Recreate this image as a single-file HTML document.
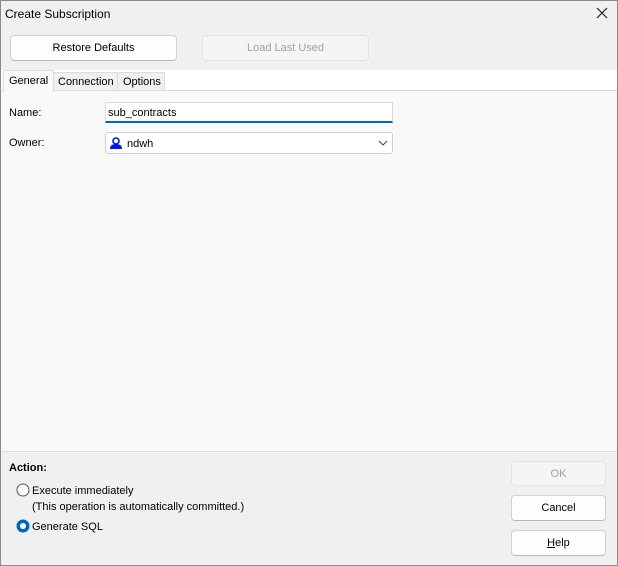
<!DOCTYPE html>
<html><head><style>
*{box-sizing:border-box;margin:0;padding:0}
body{width:618px;height:566px;overflow:hidden;background:#f0f0f0;font-family:"Liberation Sans",sans-serif;font-size:11px;color:#000;position:relative}
.frame{position:absolute;left:0;top:0;width:618px;height:566px;border:1px solid #8a8a8a}
.a{position:absolute;white-space:nowrap}
.btn{position:absolute;background:#fdfdfd;border:1px solid #d0d0d0;border-radius:4px;text-align:center;line-height:25px;border-bottom-color:#b8b8b8}
.dis{background:#f5f5f5;border-color:#e3e3e3;color:#a0a0a0}
</style></head><body>
<div class="frame"></div>
<div class="a" style="left:5px;top:7px;font-size:12px">Create Subscription</div>
<svg class="a" style="left:596px;top:7px" width="12" height="12"><path d="M1 1L11 11M11 1L1 11" stroke="#222" stroke-width="1.2"/></svg>
<div class="btn" style="left:10px;top:35px;width:167px;height:26px">Restore Defaults</div>
<div class="btn dis" style="left:202px;top:35px;width:167px;height:26px">Load Last Used</div>
<div class="a" style="left:1px;top:70px;width:616px;height:21px;background:#fff"></div>
<div class="a" style="left:1px;top:90px;width:616px;height:362px;background:#f9f9f9;border-top:1px solid #dcdcdc;border-bottom:1px solid #dcdcdc"></div>
<div class="a" style="left:3px;top:70px;width:51px;height:22px;background:#f9f9f9;border:1px solid #dcdcdc;border-bottom:none;padding:4px 0 0 5px">General</div>
<div class="a" style="left:54px;top:72px;width:64px;height:19px;background:#f0f0f0;border:1px solid #dcdcdc;border-left:none;padding:3px 0 0 4px">Connection</div>
<div class="a" style="left:118px;top:72px;width:47px;height:19px;background:#f0f0f0;border:1px solid #dcdcdc;border-left:none;padding:3px 0 0 5px">Options</div>
<div class="a" style="left:9px;top:107px">Name:</div>
<div class="a" style="left:105px;top:102px;width:288px;height:21px;background:#fff;border:1px solid #dadada;border-bottom:2px solid #0067c0;padding:4px 0 0 2px">sub_contracts</div>
<div class="a" style="left:9px;top:137px">Owner:</div>
<div class="a" style="left:105px;top:132px;width:288px;height:22px;background:#fff;border:1px solid #cfcfcf;border-radius:3px;padding:5px 0 0 21px">ndwh</div>
<svg class="a" style="left:109px;top:137px" width="14" height="13"><circle cx="7" cy="4" r="3" fill="none" stroke="#0018e0" stroke-width="1.6"/><path d="M1 12Q1 7 7 7Q13 7 13 12Z" fill="#0018e0"/></svg>
<svg class="a" style="left:378px;top:140px" width="10" height="7"><path d="M1 1L5 5L9 1" fill="none" stroke="#444" stroke-width="1"/></svg>
<div class="a" style="left:9px;top:462px;font-weight:bold">Action:</div>
<svg class="a" style="left:16px;top:483px" width="14" height="14"><circle cx="7" cy="7" r="6" fill="#fff" stroke="#555" stroke-width="1"/></svg>
<div class="a" style="left:32px;top:485px">Execute immediately</div>
<div class="a" style="left:32px;top:501px">(This operation is automatically committed.)</div>
<svg class="a" style="left:16px;top:519px" width="14" height="14"><circle cx="7" cy="7" r="6.5" fill="#0067c0"/><circle cx="7" cy="7" r="3" fill="#fff"/></svg>
<div class="a" style="left:32px;top:521px">Generate SQL</div>
<div class="btn dis" style="left:511px;top:461px;width:95px;height:25px">OK</div>
<div class="btn" style="left:511px;top:495px;width:95px;height:26px">Cancel</div>
<div class="btn" style="left:511px;top:530px;width:95px;height:26px"><u>H</u>elp</div>
</body></html>
